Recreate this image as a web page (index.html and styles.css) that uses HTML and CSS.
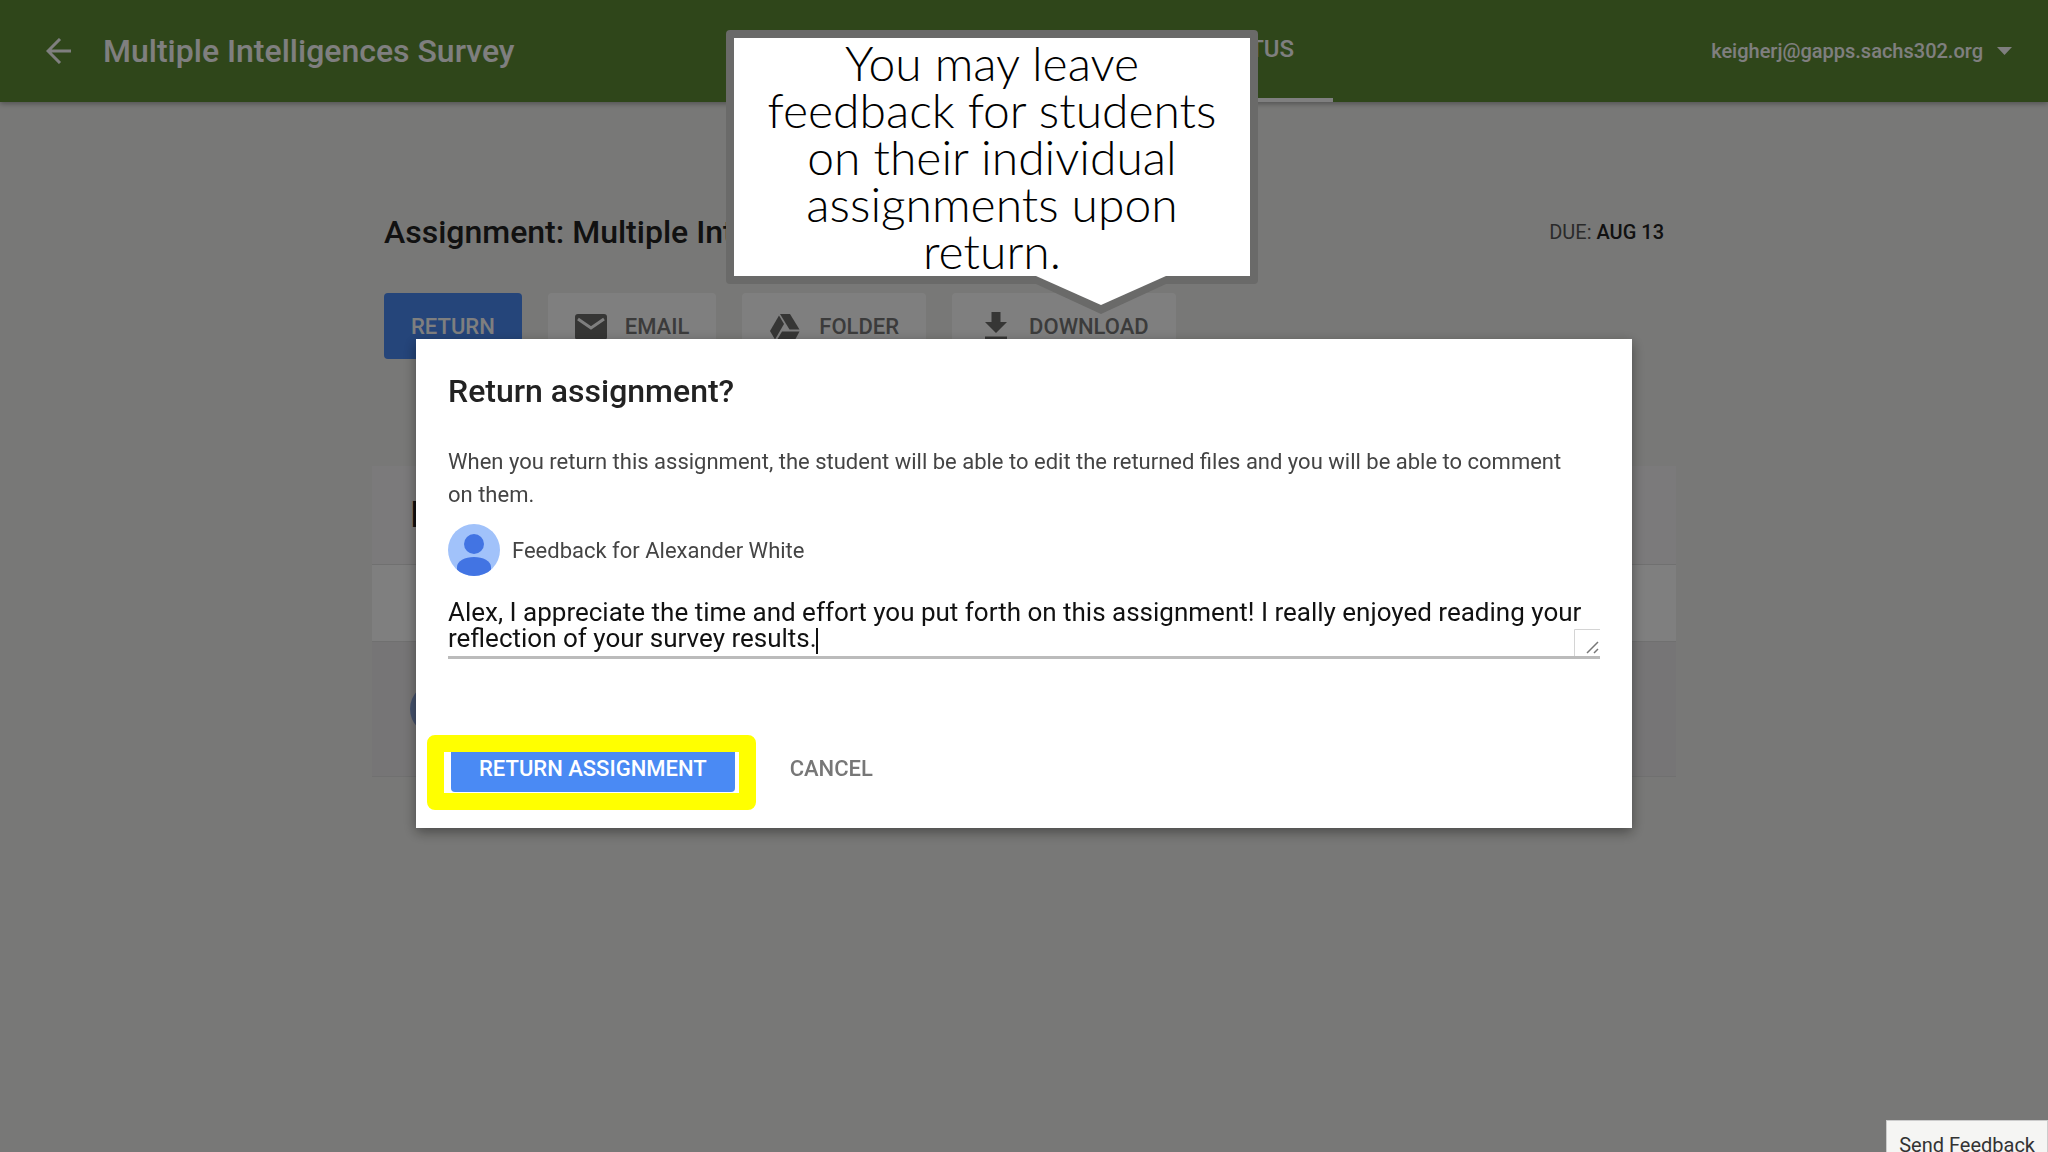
FILE: index.html
```html
<!DOCTYPE html>
<html lang="en">

<head>
    <meta charset="UTF-8">
    <meta name="viewport" content="width=device-width, initial-scale=1.0">
    <title>Multiple Intelligences Survey</title>
    <link rel="stylesheet" href="styles.css">
</head>

<body>
    <header class="topbar">
        <button type="button" class="back" aria-label="Back">
            <svg width="26" height="26" viewBox="0 0 26 26" fill="none" stroke="currentColor" stroke-width="3">
                <path d="M25 13H3M14 1L2 13l12 12" />
            </svg>
        </button>
        <h1 class="course">Multiple Intelligences Survey</h1>
        <nav class="tabs">
            <a href="#" class="tab active">STATUS</a>
        </nav>
        <button type="button" class="account">
            keigherj@gapps.sachs302.org
            <svg width="15" height="8" viewBox="0 0 15 8" fill="currentColor">
                <path d="M0 0h15L7.5 8z" />
            </svg>
        </button>
    </header>

    <main class="page">
        <div class="page-head">
            <h2 class="page-title">Assignment: Multiple Intelligences Survey</h2>
            <p class="due">DUE: <strong>AUG 13</strong></p>
        </div>
        <div class="actions">
            <button type="button" class="btn primary">RETURN</button>
            <button type="button" class="btn">
                <svg width="32" height="28" viewBox="0 0 32 28">
                    <rect y="2" width="32" height="26" rx="3" fill="#6c6c6a" />
                    <path d="M3 7l13 9 13-9" fill="none" stroke="#fff" stroke-width="3" />
                </svg>
                EMAIL
            </button>
            <button type="button" class="btn">
                <svg width="32" height="28" viewBox="-1 -2 32 28" fill="#6c6c6a">
                    <path d="M10 0h10l9.5 15.5h-10z" />
                    <path d="M9 1.5l5 8.5-9 15.5L0 17z" />
                    <path d="M12 17.5h17.5L25 26H7z" />
                </svg>
                FOLDER
            </button>
            <button type="button" class="btn">
                <svg width="32" height="28" viewBox="-6 0 32 28" fill="#6c6c6a">
                    <path d="M6.5 0h9v10H22L11 21 0 10h6.5z" />
                    <path d="M0 24.5h22v3H0z" />
                </svg>
                DOWNLOAD
            </button>
        </div>

        <section class="list">
            <div class="row summary"><span class="done">Done</span></div>
            <div class="row group"></div>
            <div class="row student">
                <svg class="avatar" width="52" height="52" viewBox="0 0 52 52">
                    <circle cx="26" cy="26" r="26" fill="#8ba4da" />
                </svg>
            </div>
        </section>
    </main>

    <div class="overlay">
        <form class="modal" role="dialog" aria-labelledby="modal-title">
            <h2 class="modal-title" id="modal-title">Return assignment?</h2>
            <p class="modal-text">When you return this assignment, the student will be able to edit the returned files and you will be able to comment on them.</p>
            <label class="feedback-label" for="feedback">
                <svg class="avatar" width="52" height="52" viewBox="0 0 52 52">
                    <defs>
                        <clipPath id="round"><circle cx="26" cy="26" r="26" /></clipPath>
                    </defs>
                    <g clip-path="url(#round)">
                        <rect width="52" height="52" fill="#a1c2fa" />
                        <circle cx="26" cy="20" r="10" fill="#4274e3" />
                        <path d="M9 52V43c0-6 8-10 17-10s17 4 17 10v9z" fill="#4274e3" />
                    </g>
                </svg>
                Feedback for Alexander White
            </label>
            <div class="feedback-field">
                <textarea id="feedback" rows="2">Alex, I appreciate the time and effort you put forth on this assignment! I really enjoyed reading your reflection of your survey results.</textarea>
                <span class="caret"></span>
                <svg class="grip" width="26" height="27" viewBox="0 0 26 27" fill="none">
                    <path d="M.5 27V.5H26" stroke="#d4d4d4" />
                    <path d="M13 24L24 13M20 24l4-4" stroke="#777" stroke-width="1.5" />
                </svg>
            </div>
            <div class="modal-actions">
                <div class="highlight">
                    <button type="submit" class="confirm">RETURN ASSIGNMENT</button>
                </div>
                <button type="button" class="cancel">CANCEL</button>
            </div>
        </form>
    </div>

    <aside class="callout">
        You may leave feedback for students on their individual assignments upon return.
        <svg class="pointer" width="130" height="38" viewBox="0 0 130 38">
            <path d="M0 0h130v8L65 38 0 8z" fill="#6a6a69" />
            <path d="M0 0h130L65 29z" fill="#fff" />
        </svg>
    </aside>

    <button type="button" class="send-feedback">Send Feedback</button>
</body>

</html>
```
FILE: styles.css
```css
* {
    box-sizing: border-box;
}

body {
    margin: 0;
    min-height: 100vh;
    background: #f1f1ee;
    font-family: Roboto, "Liberation Sans", sans-serif;
    font-size: 22px;
    color: #222;
}

h1,
h2,
p {
    margin: 0;
}

button {
    border: 0;
    padding: 0;
    background: none;
    font: inherit;
    color: inherit;
    cursor: pointer;
}

svg {
    display: block;
    flex: none;
}

/* top bar */
.topbar {
    position: relative;
    display: flex;
    align-items: center;
    height: 102px;
    padding: 0 36px 0 46px;
    background: #5e8c34;
    box-shadow: 0 2px 5px rgba(0, 0, 0, .3);
    color: #fff;
}

.course {
    margin-left: 31px;
    font-size: 32px;
    font-weight: 500;
}

.tabs {
    position: absolute;
    right: 715px;
    height: 102px;
}

.tab {
    display: flex;
    align-items: center;
    height: 100%;
    padding: 0 39px;
    border-bottom: 4px solid #fff;
    color: #fff;
    font-size: 24px;
    font-weight: 500;
    text-decoration: none;
}

.account {
    display: flex;
    align-items: center;
    gap: 14px;
    margin-left: auto;
    font-size: 20px;
    font-weight: 500;
}

/* assignment page */
.page {
    max-width: 1280px;
    margin: 0 auto;
    padding-top: 110px;
}

.page-head {
    display: flex;
    justify-content: space-between;
    align-items: center;
    height: 40px;
}

.page-title {
    font-size: 32px;
    font-weight: 500;
}

.due {
    color: #555;
    font-size: 20px;
}

.due strong {
    color: #222;
    font-weight: 500;
}

.actions {
    display: flex;
    gap: 26px;
    margin-top: 41px;
}

.btn {
    display: flex;
    align-items: center;
    gap: 18px;
    height: 66px;
    padding: 0 27px;
    border-radius: 4px;
    background: #fff;
    color: #777;
    font-weight: 500;
}

.btn.primary {
    background: #4a8af4;
    color: #fff;
}

.list {
    margin: 107px -12px 0;
}

.row {
    display: flex;
    align-items: center;
    padding: 0 38px;
    border-bottom: 1px solid #e0e0e0;
}

.summary {
    height: 99px;
    background: #f7f5f6;
}

.group {
    height: 77px;
    background: #fff;
}

.student {
    height: 135px;
    background: #edebec;
}

.done {
    font-size: 36px;
}

/* dialog */
.overlay {
    position: fixed;
    inset: 0;
    display: flex;
    justify-content: center;
    align-items: flex-start;
    padding-top: 339px;
    background: rgba(0, 0, 0, .5);
}

.modal {
    width: 100%;
    max-width: 1216px;
    padding: 32px 32px 36px;
    background: #fff;
    box-shadow: 0 4px 12px rgba(0, 0, 0, .4);
}

.modal-title {
    font-size: 32px;
    font-weight: 500;
    line-height: 40px;
}

.modal-text {
    margin-top: 34px;
    padding-right: 16px;
    color: #444;
    line-height: 33px;
}

.feedback-label {
    display: flex;
    align-items: center;
    gap: 12px;
    margin-top: 13px;
    color: #444;
}

.feedback-field {
    position: relative;
    margin-top: 23px;
}

.feedback-field textarea {
    display: block;
    width: 100%;
    height: 60px;
    padding: 0;
    border: 0;
    border-bottom: 3px solid #bbb;
    outline: 0;
    resize: none;
    overflow: hidden;
    font: 26px/26px Roboto, "Liberation Sans", sans-serif;
    color: #111;
}

.caret {
    position: absolute;
    left: 368px;
    top: 29px;
    width: 2px;
    height: 26px;
    background: #111;
}

.grip {
    position: absolute;
    right: 0;
    bottom: 3px;
}

.modal-actions {
    display: flex;
    align-items: center;
    gap: 55px;
    margin-top: 85px;
    padding-left: 3px;
}

.highlight {
    position: relative;
}

/* marker box drawn round the confirm button */
.highlight::after {
    content: "";
    position: absolute;
    inset: -9px -21px -18px -24px;
    border: 17px solid #ff0;
    border-radius: 8px;
    pointer-events: none;
}

.confirm {
    height: 48px;
    padding: 0 28px;
    border-radius: 4px;
    background: #4a8af4;
    color: #fff;
    font-weight: 500;
}

.cancel {
    color: #777;
    font-weight: 500;
}

/* speech bubble */
.callout {
    position: absolute;
    left: 726px;
    top: 30px;
    width: 532px;
    height: 254px;
    padding: 1px 28px;
    border: 8px solid #6a6a69;
    border-radius: 4px;
    background: #fff;
    color: #000;
    font: 300 48px/47px Lato, "Open Sans", sans-serif;
    text-align: center;
}

.pointer {
    position: absolute;
    left: 302px;
    top: 238px;
}

.send-feedback {
    position: fixed;
    right: 0;
    bottom: -18px;
    height: 50px;
    padding: 0 12px;
    border: 1px solid #ccc;
    background: #f5f5f3;
    color: #333;
    font-size: 20px;
}
```
